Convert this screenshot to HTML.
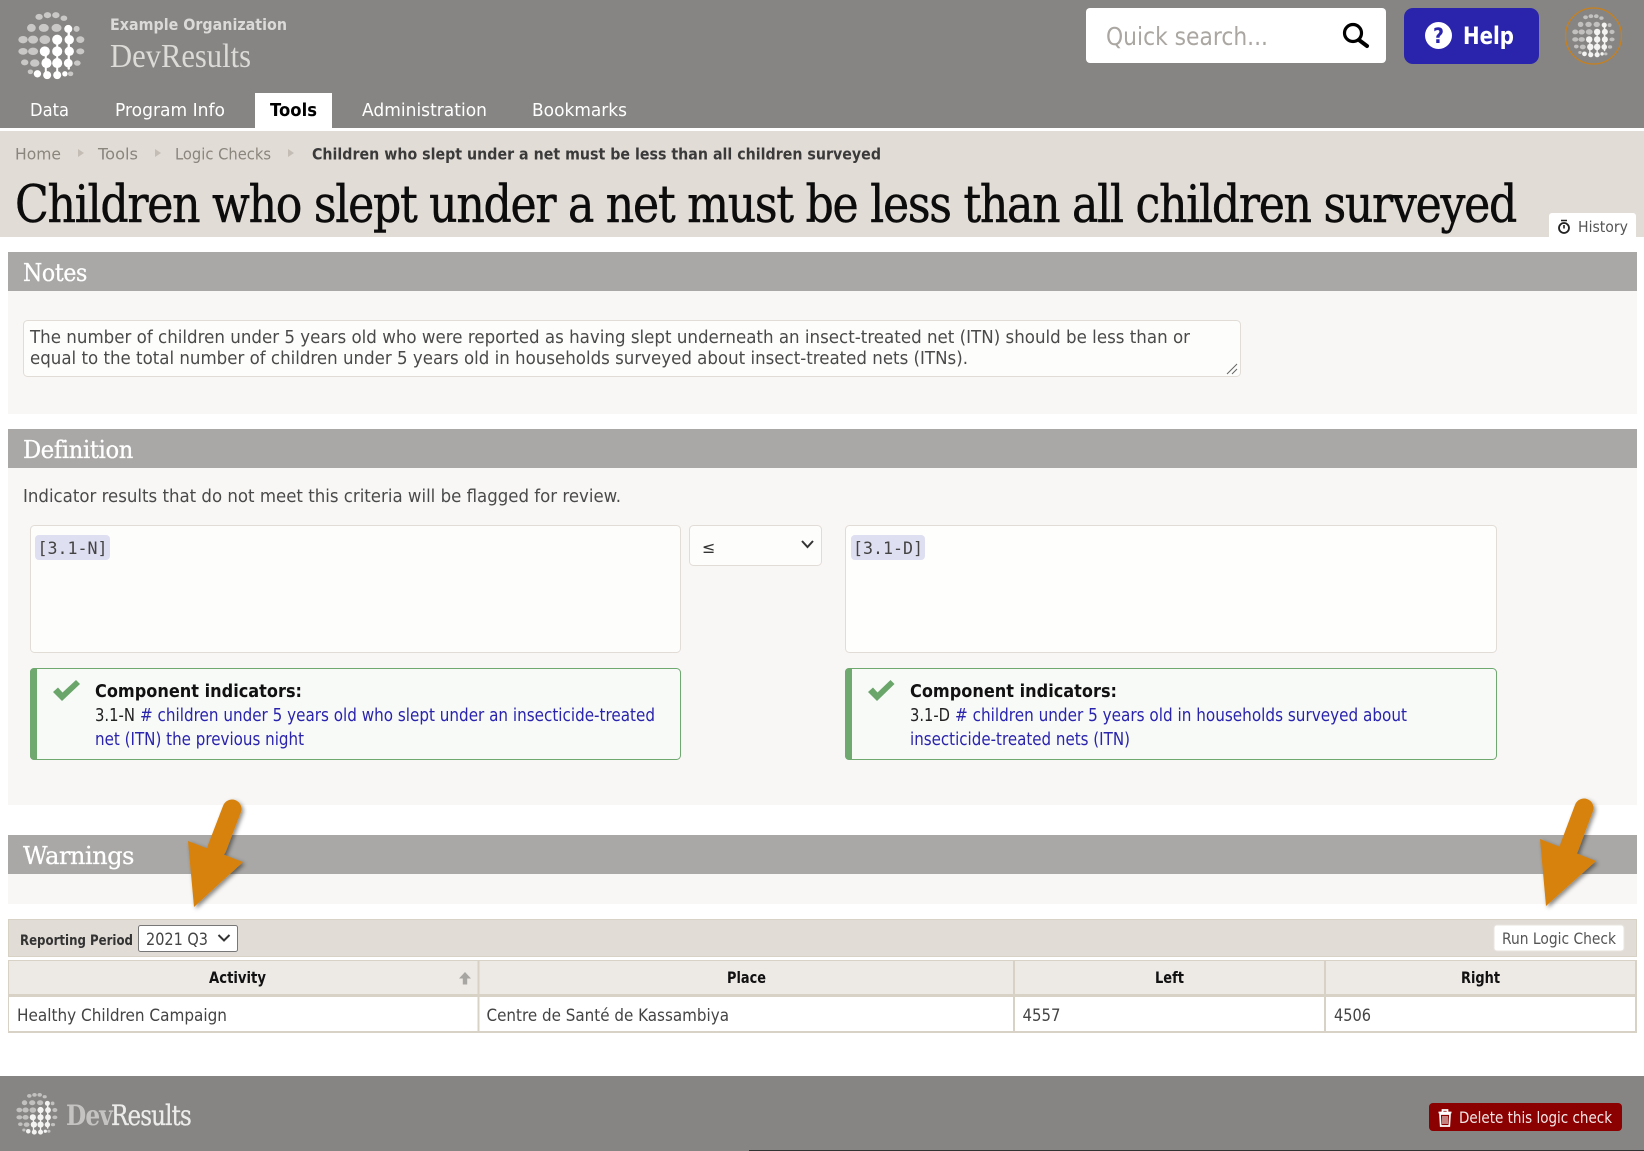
<!DOCTYPE html>
<html lang="en"><head><meta charset="utf-8"><title>Logic Check</title>
<style>
html,body{margin:0;padding:0;background:#fff;width:1644px;height:1151px;overflow:hidden}
svg{display:block}
text{font-family:"DejaVu Sans","Liberation Sans",sans-serif;white-space:pre}
.s{font-family:"DejaVu Serif","Liberation Serif",serif}
.l{font-family:"Liberation Serif","DejaVu Serif",serif}
.m{font-family:"DejaVu Sans Mono","Liberation Mono",monospace;font-size:16.5px;fill:#444}
.b{font-weight:bold}
.h{font-size:24.5px;fill:#fff;stroke:#fff;stroke-width:.3px;letter-spacing:-.4px}
.body{font-size:18px;fill:#4a4a4a}
.link{fill:#2a24ac;font-size:17.5px}
</style></head><body>
<svg width="1644" height="1151" viewBox="0 0 1644 1151" xmlns="http://www.w3.org/2000/svg">
<defs>
<filter id="sh" x="-30%" y="-30%" width="160%" height="160%"><feDropShadow dx="2" dy="2" stdDeviation="2" flood-color="#000" flood-opacity=".45"/></filter>
<symbol id="globe" viewBox="55 38 200 202">
<g fill="#c9c8c6">
<ellipse cx="118" cy="52" rx="11" ry="9"/><ellipse cx="143" cy="47" rx="11" ry="9"/><ellipse cx="168" cy="47" rx="11" ry="9"/><ellipse cx="192" cy="56" rx="10" ry="8"/>
<ellipse cx="95" cy="85" rx="13" ry="12"/><ellipse cx="132" cy="85" rx="15" ry="12"/><ellipse cx="170" cy="85" rx="15" ry="12"/><ellipse cx="230" cy="88" rx="9" ry="9"/>
<ellipse cx="70" cy="120" rx="14" ry="11"/><ellipse cx="100" cy="120" rx="15" ry="12"/><ellipse cx="135" cy="120" rx="16" ry="13"/><ellipse cx="241" cy="120" rx="12" ry="10"/>
<ellipse cx="70" cy="155" rx="14" ry="10"/><ellipse cx="100" cy="155" rx="15" ry="11"/><ellipse cx="241" cy="155" rx="12" ry="9"/>
<ellipse cx="75" cy="188" rx="11" ry="9"/><ellipse cx="105" cy="190" rx="14" ry="11"/><ellipse cx="232" cy="190" rx="10" ry="8"/>
<ellipse cx="212" cy="222" rx="8" ry="7"/><ellipse cx="92" cy="216" rx="8" ry="7"/>
</g>
<g fill="#fff">
<rect x="203" y="80" width="7" height="130" rx="3.500"/>
<rect x="169" y="110" width="6" height="120" rx="3"/>
<rect x="135" y="150" width="6" height="80" rx="3"/>
<circle cx="205" cy="88" r="12"/>
<circle cx="172" cy="120" r="15"/><circle cx="208" cy="120" r="14"/>
<circle cx="135" cy="155" r="15"/><circle cx="172" cy="155" r="15"/><circle cx="208" cy="155" r="14"/>
<circle cx="140" cy="190" r="15"/><circle cx="172" cy="190" r="15"/><circle cx="205" cy="190" r="13"/>
<circle cx="113" cy="222" r="11"/><circle cx="142" cy="226" r="12"/><circle cx="172" cy="226" r="12"/><circle cx="195" cy="222" r="8"/>
</g>
</symbol>
</defs>

<!-- header -->
<rect width="1644" height="128" fill="#868583"/>
<use href="#globe" x="18" y="12" width="67" height="68"/>
<text x="110" y="30" class="b" font-size="16" fill="#dcdad8" textLength="177" lengthAdjust="spacingAndGlyphs">Example Organization</text>
<text x="110" y="67" class="l" font-size="34" fill="#dddbd8" textLength="141" lengthAdjust="spacingAndGlyphs">DevResults</text>
<rect x="255" y="93" width="77" height="35" fill="#fff"/>
<g font-size="18" fill="#fff">
<text x="30" y="116" textLength="39" lengthAdjust="spacingAndGlyphs">Data</text>
<text x="115" y="116" textLength="110" lengthAdjust="spacingAndGlyphs">Program Info</text>
<text x="270" y="116" class="b" fill="#000" textLength="47" lengthAdjust="spacingAndGlyphs">Tools</text>
<text x="362" y="116" textLength="125" lengthAdjust="spacingAndGlyphs">Administration</text>
<text x="532" y="116" textLength="95" lengthAdjust="spacingAndGlyphs">Bookmarks</text>
</g>
<rect x="1086" y="8" width="300" height="55" rx="4" fill="#fff"/>
<text x="1106" y="45" font-size="25" fill="#aaa6a1" textLength="162" lengthAdjust="spacingAndGlyphs">Quick search...</text>
<circle cx="1353" cy="33" r="8.500" fill="none" stroke="#000" stroke-width="3.200"/>
<path d="M1359 40L1367 46" stroke="#000" stroke-width="4" stroke-linecap="round"/>
<rect x="1404" y="8" width="135" height="56" rx="9" fill="#2a24ac"/>
<circle cx="1438.500" cy="35.500" r="13.500" fill="#fff"/>
<text x="1433" y="43" class="b" font-size="21" fill="#2a24ac" textLength="11" lengthAdjust="spacingAndGlyphs">?</text>
<text x="1463" y="44" class="b" font-size="24" fill="#fff" textLength="51" lengthAdjust="spacingAndGlyphs">Help</text>
<circle cx="1593.500" cy="36" r="28" fill="none" stroke="#c8801c" stroke-width="1.300"/>
<use href="#globe" x="1572" y="14" width="43" height="44" opacity=".9"/>

<!-- page title -->
<rect y="131" width="1644" height="106" fill="#e2dcd6"/>
<g font-size="16" fill="#8a857d">
<text x="15" y="159.500" textLength="46" lengthAdjust="spacingAndGlyphs">Home</text>
<text x="98" y="159.500" textLength="40" lengthAdjust="spacingAndGlyphs">Tools</text>
<text x="175" y="159.500" textLength="96" lengthAdjust="spacingAndGlyphs">Logic Checks</text>
</g>
<g fill="#c3bdb5"><path d="M78 149l6 4-6 4z"/><path d="M155 149l6 4-6 4z"/><path d="M288 149l6 4-6 4z"/></g>
<text x="312" y="159.500" class="b" font-size="16" fill="#3a3a3a" textLength="569" lengthAdjust="spacingAndGlyphs">Children who slept under a net must be less than all children surveyed</text>
<text x="15" y="222" class="s" font-size="51" fill="#0c0c0c" stroke="#0c0c0c" stroke-width=".5" letter-spacing="-1.500" textLength="1501" lengthAdjust="spacingAndGlyphs">Children who slept under a net must be less than all children surveyed</text>
<path d="M1549 237v-21a3 3 0 0 1 3-3h81a3 3 0 0 1 3 3v21z" fill="#fff"/>
<circle cx="1564" cy="228" r="5" fill="none" stroke="#222" stroke-width="1.800"/>
<path d="M1561 220.500h6M1564 225v3.500" stroke="#222" stroke-width="1.600"/>
<text x="1578" y="232" font-size="15" fill="#555" textLength="50" lengthAdjust="spacingAndGlyphs">History</text>

<!-- notes -->
<rect x="8" y="291" width="1629" height="123" fill="#f8f7f5"/>
<rect x="8" y="252" width="1629" height="39" fill="#a9a8a6"/>
<text x="23" y="281" class="s h" textLength="64" lengthAdjust="spacingAndGlyphs">Notes</text>
<rect x="23.500" y="320.500" width="1217" height="56" rx="4" fill="#fdfdfb" stroke="#e2dcd6"/>
<text x="30" y="343" class="body" textLength="1160" lengthAdjust="spacingAndGlyphs">The number of children under 5 years old who were reported as having slept underneath an insect-treated net (ITN) should be less than or</text>
<text x="30" y="364" class="body" textLength="938" lengthAdjust="spacingAndGlyphs">equal to the total number of children under 5 years old in households surveyed about insect-treated nets (ITNs).</text>
<path d="M1227 374l10-10M1232 374l5-5" stroke="#666" stroke-width="1"/>

<!-- definition -->
<rect x="8" y="468" width="1629" height="337" fill="#f8f7f5"/>
<rect x="8" y="429" width="1629" height="39" fill="#a9a8a6"/>
<text x="23" y="458" class="s h" textLength="110" lengthAdjust="spacingAndGlyphs">Definition</text>
<text x="23" y="502" class="body" textLength="598" lengthAdjust="spacingAndGlyphs">Indicator results that do not meet this criteria will be flagged for review.</text>

<rect x="30.500" y="525.500" width="650" height="127" rx="4" fill="#fdfdfb" stroke="#e2dcd6"/>
<rect x="35" y="535" width="75" height="25" rx="4" fill="#dfdff2"/>
<text x="37.500" y="554" class="m" textLength="70" lengthAdjust="spacingAndGlyphs">[3.1-N]</text>
<rect x="689.500" y="525.500" width="132" height="40" rx="4" fill="#fdfdfb" stroke="#e2dcd6"/>
<text x="702" y="553" font-size="16" fill="#333">≤</text>
<path d="M802 541l5.500 6 5.500-6" fill="none" stroke="#333" stroke-width="2"/>
<rect x="845.500" y="525.500" width="651" height="127" rx="4" fill="#fefefc" stroke="#e2dcd6"/>
<rect x="851" y="535" width="74" height="25" rx="4" fill="#dfdff2"/>
<text x="853" y="554" class="m" textLength="70" lengthAdjust="spacingAndGlyphs">[3.1-D]</text>

<rect x="30.500" y="668.500" width="650" height="91" rx="4" fill="#f8faf8" stroke="#6fa96f"/>
<path d="M34 668h3v92h-3a4 4 0 0 1-4-4v-84a4 4 0 0 1 4-4z" fill="#6fa96f"/>
<path d="M53 692l5-4.500 4.500 5 13.500-12.500 4 4-18 17z" fill="#6aa56a"/>
<text x="95" y="697" class="b" font-size="18" fill="#111" textLength="207" lengthAdjust="spacingAndGlyphs">Component indicators:</text>
<text x="95" y="721" font-size="17.500" fill="#222" textLength="40" lengthAdjust="spacingAndGlyphs">3.1-N</text>
<text x="140" y="721" class="link" textLength="515" lengthAdjust="spacingAndGlyphs"># children under 5 years old who slept under an insecticide-treated</text>
<text x="95" y="745" class="link" textLength="209" lengthAdjust="spacingAndGlyphs">net (ITN) the previous night</text>

<rect x="845.500" y="668.500" width="651" height="91" rx="4" fill="#f8faf8" stroke="#6fa96f"/>
<path d="M849 668h3v92h-3a4 4 0 0 1-4-4v-84a4 4 0 0 1 4-4z" fill="#6fa96f"/>
<path d="M868 692l5-4.500 4.500 5 13-12.500 4 4-17.500 17z" fill="#6aa56a"/>
<text x="910" y="697" class="b" font-size="18" fill="#111" textLength="207" lengthAdjust="spacingAndGlyphs">Component indicators:</text>
<text x="910" y="721" font-size="17.500" fill="#222" textLength="40" lengthAdjust="spacingAndGlyphs">3.1-D</text>
<text x="955" y="721" class="link" textLength="452" lengthAdjust="spacingAndGlyphs"># children under 5 years old in households surveyed about</text>
<text x="910" y="745" class="link" textLength="220" lengthAdjust="spacingAndGlyphs">insecticide-treated nets (ITN)</text>

<!-- warnings -->
<rect x="8" y="874" width="1629" height="30" fill="#f8f7f5"/>
<rect x="8" y="835" width="1629" height="39" fill="#a9a8a6"/>
<text x="23" y="864" class="s h" textLength="111" lengthAdjust="spacingAndGlyphs">Warnings</text>

<rect x="8.500" y="919.500" width="1628" height="37" fill="#e2dcd6" stroke="#d8d2c6"/>
<text x="20" y="945" class="b" font-size="14.500" fill="#333" textLength="113" lengthAdjust="spacingAndGlyphs">Reporting Period</text>
<rect x="138.500" y="925.500" width="99" height="26" rx="2" fill="#fff" stroke="#777"/>
<text x="146" y="945" font-size="17" fill="#444" textLength="62" lengthAdjust="spacingAndGlyphs">2021 Q3</text>
<path d="M218.500 935l5.500 5.500 5.500-5.500" fill="none" stroke="#333" stroke-width="2"/>
<rect x="1494" y="925" width="130" height="26" rx="3" fill="#fff" stroke="#e8e4df"/>
<text x="1502" y="944" font-size="16" fill="#555" textLength="114" lengthAdjust="spacingAndGlyphs">Run Logic Check</text>

<!-- table -->
<rect x="8" y="960" width="1629" height="34" fill="#edeae6"/>
<rect x="8" y="997" width="1629" height="36" fill="#fff"/>
<g fill="#d8d2c6">
<rect x="8" y="960" width="1629" height="1"/>
<rect x="8" y="994" width="1629" height="3"/>
<rect x="8" y="1031" width="1629" height="2"/>
<rect x="8" y="960" width="1" height="73"/>
<rect x="1635" y="960" width="2" height="73"/>
<rect x="477.500" y="960" width="2" height="73"/>
<rect x="1013" y="960" width="2" height="73"/>
<rect x="1324" y="960" width="2" height="73"/>
</g>
<g font-size="16" fill="#111">
<text x="209" y="983" class="b" textLength="57" lengthAdjust="spacingAndGlyphs">Activity</text>
<text x="727" y="983" class="b" textLength="39" lengthAdjust="spacingAndGlyphs">Place</text>
<text x="1155" y="983" class="b" textLength="29" lengthAdjust="spacingAndGlyphs">Left</text>
<text x="1461" y="983" class="b" textLength="39" lengthAdjust="spacingAndGlyphs">Right</text>
</g>
<path d="M465 972l-6 6.500h3.800v6h4.400v-6h3.800z" fill="#a8a6a2"/>
<g font-size="17" fill="#444">
<text x="17" y="1021" textLength="210" lengthAdjust="spacingAndGlyphs">Healthy Children Campaign</text>
<text x="486.500" y="1021" textLength="242.500" lengthAdjust="spacingAndGlyphs">Centre de Santé de Kassambiya</text>
<text x="1022.500" y="1021" textLength="38" lengthAdjust="spacingAndGlyphs">4557</text>
<text x="1334" y="1021" textLength="37" lengthAdjust="spacingAndGlyphs">4506</text>
</g>

<!-- footer -->
<rect y="1076" width="1644" height="75" fill="#868583"/>
<rect x="749" y="1150" width="895" height="1" fill="#333"/>
<use href="#globe" x="16" y="1093" width="42" height="42" opacity=".9"/>
<text x="66" y="1125" class="s b" font-size="28" fill="#c4c3c1" letter-spacing="-1" textLength="46" lengthAdjust="spacingAndGlyphs">Dev</text>
<text x="111" y="1125" class="s" font-size="28" fill="#ececea" stroke="#ececea" stroke-width=".3" letter-spacing="-1" textLength="80" lengthAdjust="spacingAndGlyphs">Results</text>
<rect x="1429" y="1103" width="193" height="28" rx="4" fill="#8b0000"/>
<path d="M1438.500 1112.500h13M1442.500 1112v-2h5v2M1440 1114h10l-.7 12h-8.600z" fill="none" stroke="#fff" stroke-width="1.700"/>
<path d="M1443 1116v8M1445 1116v8M1447 1116v8" stroke="#fff" stroke-width="1"/>
<text x="1459" y="1123" font-size="16" fill="#f2e6e6" textLength="153" lengthAdjust="spacingAndGlyphs">Delete this logic check</text>

<!-- arrows -->
<g filter="url(#sh)" fill="#d7820f">
<path d="M232 809L217 848" stroke="#d7820f" stroke-width="19" stroke-linecap="round"/>
<path d="M188 841L243 862L194 907z"/>
</g>
<g filter="url(#sh)" fill="#d7820f">
<path d="M1584 808L1569 848" stroke="#d7820f" stroke-width="19" stroke-linecap="round"/>
<path d="M1540 839L1596 861L1546 906z"/>
</g>
</svg>
</body></html>
